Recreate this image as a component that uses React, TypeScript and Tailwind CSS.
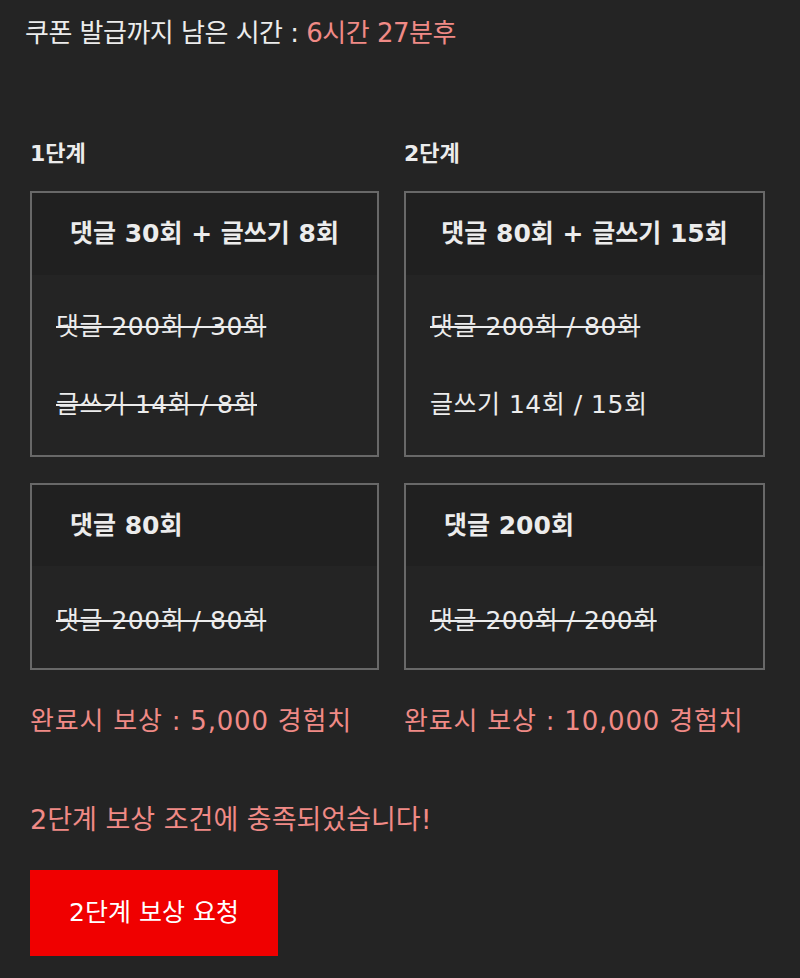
const font = { fontFamily: '"DejaVu Sans", "Noto Sans CJK KR", sans-serif' };

interface Row {
  text: string;
  done: boolean;
}

interface Mission {
  title: string;
  rows: Row[];
}

const stages: { label: string; width: string; missions: Mission[]; reward: string }[] = [
  {
    label: "1단계",
    width: "w-[349px]",
    reward: "완료시 보상 : 5,000 경험치",
    missions: [
      {
        title: "댓글 30회 + 글쓰기 8회",
        rows: [
          { text: "댓글 200회 / 30회", done: true },
          { text: "글쓰기 14회 / 8회", done: true },
        ],
      },
      {
        title: "댓글 80회",
        rows: [{ text: "댓글 200회 / 80회", done: true }],
      },
    ],
  },
  {
    label: "2단계",
    width: "w-[361px]",
    reward: "완료시 보상 : 10,000 경험치",
    missions: [
      {
        title: "댓글 80회 + 글쓰기 15회",
        rows: [
          { text: "댓글 200회 / 80회", done: true },
          { text: "글쓰기 14회 / 15회", done: false },
        ],
      },
      {
        title: "댓글 200회",
        rows: [{ text: "댓글 200회 / 200회", done: true }],
      },
    ],
  },
];

function MissionBox({ mission, first }: { mission: Mission; first: boolean }) {
  const two = mission.rows.length > 1;
  return (
    <div className="border-2 border-[#686868] bg-[#242424]">
      <div
        className={`bg-[#202020] flex items-center font-bold text-[25px] text-[#ececec] ${
          first ? "h-[82px] justify-center" : "h-[81px] pl-[38px]"
        }`}
      >
        {mission.title}
      </div>
      <div
        className={`flex flex-col pl-[24px] text-[25px] tracking-[0.5px] text-[#ececec] ${
          two ? "pt-[34px] pb-[32px] gap-[42px]" : "pt-[37px] pb-[29px]"
        }`}
      >
        {mission.rows.map((r) => (
          <div key={r.text} className={`h-[36px] leading-[36px] ${r.done ? "line-through decoration-2" : ""}`}>
            {r.text}
          </div>
        ))}
      </div>
    </div>
  );
}

export default function App() {
  return (
    <div className="min-h-[978px] w-[800px] bg-[#242424] text-[#ececec]" style={font}>
      <div className="pl-[25px] pt-[15px] h-[36px] leading-[36px] text-[26px] tracking-[-0.5px] box-content">
        쿠폰 발급까지 남은 시간 : <span className="text-[#f08a86]">6시간 27분후</span>
      </div>

      <div className="flex gap-[25px] pl-[30px] mt-[88px]">
        {stages.map((s) => (
          <div key={s.label} className={`${s.width} flex flex-col`}>
            <div className="h-[30px] leading-[30px] text-[22px] font-bold">{s.label}</div>
            <div className="mt-[22px] flex flex-col gap-[26px]">
              {s.missions.map((m, i) => (
                <MissionBox key={m.title} mission={m} first={i === 0} />
              ))}
            </div>
            <div className="mt-[33px] h-[36px] leading-[36px] text-[26px] tracking-[0.8px] text-[#f08a86] whitespace-nowrap">
              {s.reward}
            </div>
          </div>
        ))}
      </div>

      <div className="pl-[30px] mt-[63px] h-[36px] leading-[36px] text-[27px] text-[#f08a86]">
        2단계 보상 조건에 충족되었습니다!
      </div>

      <div className="pl-[30px] mt-[32px]">
        <button className="w-[248px] h-[86px] bg-[#f00000] text-white text-[25px]">2단계 보상 요청</button>
      </div>
    </div>
  );
}
